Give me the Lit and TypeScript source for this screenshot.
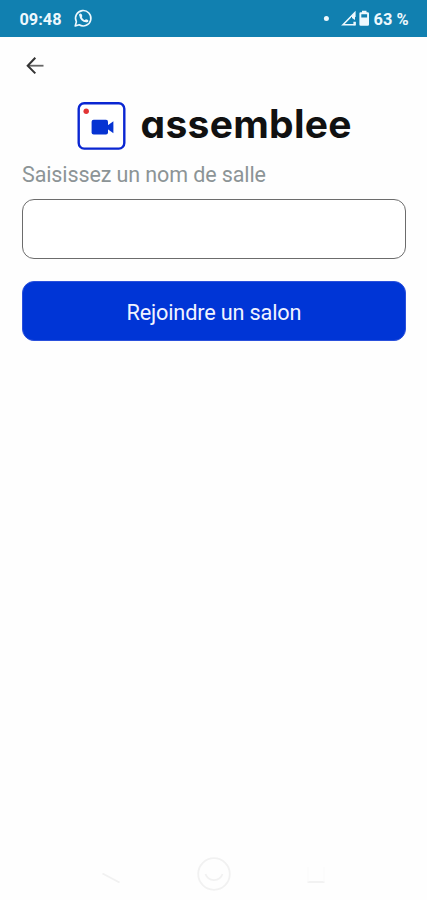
import { LitElement, html, css } from "lit";
import { customElement } from "lit/decorators.js";

@customElement("app-root")
export class AppRoot extends LitElement {
  static styles = css`
    :host {
      display: flex;
      flex-direction: column;
      height: 900px;
      background: #fefefe;
      font-family: Roboto, sans-serif;
      overflow: hidden;
    }
    * { box-sizing: border-box; }
    svg { display: block; overflow: visible; }
    text { white-space: pre; }
    .status { height: 37px; flex: none; background: #1180b0; }
    .bar { height: 57px; flex: none; padding: 18px 0 0 25px; }
    .back { display: block; width: 20px; height: 20px; padding: 0; border: 0; background: none; }
    .brand { height: 62px; flex: none; }
    .wordmark { font-feature-settings: "cv11" 1; }
    .form { display: flex; flex-direction: column; padding: 0 21px 0 22px; }
    label { height: 43px; padding-top: 4px; }
    input {
      height: 60px;
      width: 100%;
      margin: 0;
      padding: 0 16px;
      border: 1px solid #6c6c6c;
      border-radius: 12px;
      background: #fff;
      font: 20px Roboto, sans-serif;
      outline: none;
    }
    .join {
      height: 60px;
      margin-top: 22px;
      padding: 0;
      border: 1px solid #2a50dc;
      border-radius: 12px;
      background: #0035d6;
      font-family: Roboto, sans-serif;
    }
    .nav { margin-top: auto; height: 60px; flex: none; }
  `;

  render() {
    return html`
      <header class="status">
        <svg width="427" height="37" viewBox="0 0 427 37" fill="#eef8fd" font-family="Roboto, sans-serif" font-weight="700">
          <text x="19.5" y="24.5" font-size="16.5" textLength="42" lengthAdjust="spacingAndGlyphs">09:48</text>
          <g fill="none" stroke="#eef8fd" stroke-linecap="round" stroke-linejoin="round">
            <path stroke-width="1.6" d="M75.2 26 L76.4 21.8 A7.7 7.7 0 1 1 79.2 24.8 Z" />
            <path stroke-width="2" d="M80.5 15 C80.2 18.6 83.3 21.5 86.4 21.3" />
            <path stroke-width="2.6" d="M80.4 14.8 L81 15.8 M86.2 20.6 L87.1 21" />
          </g>
          <circle cx="326.4" cy="18.5" r="2.5" />
          <path d="M343 24.7 L354.8 12.8 V24.7 Z" fill="none" stroke="#eef8fd" stroke-width="1.6" />
          <path d="M351 17 h5 v5 h-5 z" fill="#1180b0" />
          <path d="M352 18 V16 L355 12.8 V20 M353.4 21.7 h2.3 v3.6 h-2.3 z" />
          <path fill-rule="evenodd" d="M362 10.8 h4.5 v1.5 h1.2 q1.3 0 1.3 1.3 v11 q0 1.2-1.3 1.2 h-7 q-1.3 0-1.3-1.2 v-11 q0-1.3 1.3-1.3 h1.3 z M361.3 14.2 v3.3 h5.8 v-3.3 z" />
          <text x="373.5" y="24.5" font-size="16.5" textLength="35" lengthAdjust="spacingAndGlyphs">63 %</text>
        </svg>
      </header>

      <div class="bar">
        <button class="back" aria-label="Retour">
          <svg width="20" height="20" viewBox="0 0 20 20" fill="none">
            <path d="M3 10.7 H18.5" stroke="#666" stroke-width="1.8" />
            <path d="M10.3 2.7 L2.7 10.7 L10.3 18.4" stroke="#333" stroke-width="2" />
          </svg>
        </button>
      </div>

      <div class="brand">
        <svg width="427" height="62" viewBox="0 -6 427 62">
          <rect x="78.7" y="3.2" width="45.6" height="45.4" rx="5.5" fill="#fff" stroke="#0a26d2" stroke-width="2.4" />
          <circle cx="86.2" cy="11.2" r="2.7" fill="#e23434" />
          <rect x="91.6" y="19.8" width="16.4" height="14.8" rx="2" fill="#0633d2" />
          <path d="M107.5 25.5 L113.4 21.3 V33.3 L107.5 29 Z" fill="#0633d2" />
          <text class="wordmark" x="140.5" y="38" font-family="Inter, sans-serif" font-size="39" font-weight="700" fill="#111"
            textLength="211" lengthAdjust="spacing">assemblee</text>
        </svg>
      </div>

      <main class="form">
        <label for="room">
          <svg width="260" height="28" viewBox="0 0 260 28">
            <text x="0" y="21.5" font-size="21.5" fill="#8c9496" textLength="244" lengthAdjust="spacing">Saisissez un nom de salle</text>
          </svg>
        </label>
        <input id="room" type="text" />
        <button class="join">
          <svg width="382" height="58" viewBox="0 0 382 58">
            <text x="103.5" y="38" font-size="21.7" fill="#f0f3ff" textLength="175" lengthAdjust="spacing">Rejoindre un salon</text>
          </svg>
        </button>
      </main>

      <nav class="nav">
        <svg width="427" height="60" viewBox="0 0 427 60" fill="none" stroke="#f1f1f1" stroke-width="1.8">
          <path d="M102.5 33.5 L119.5 42.5" />
          <circle cx="214" cy="34" r="15.8" />
          <path d="M205.5 34 A9 9 0 0 0 222.5 34" />
          <path d="M307.5 42 H324.5" />
          <path d="M308 27 V42 M324 27 V42" stroke="#fafafa" stroke-width="1" />
        </svg>
      </nav>
    `;
  }
}
